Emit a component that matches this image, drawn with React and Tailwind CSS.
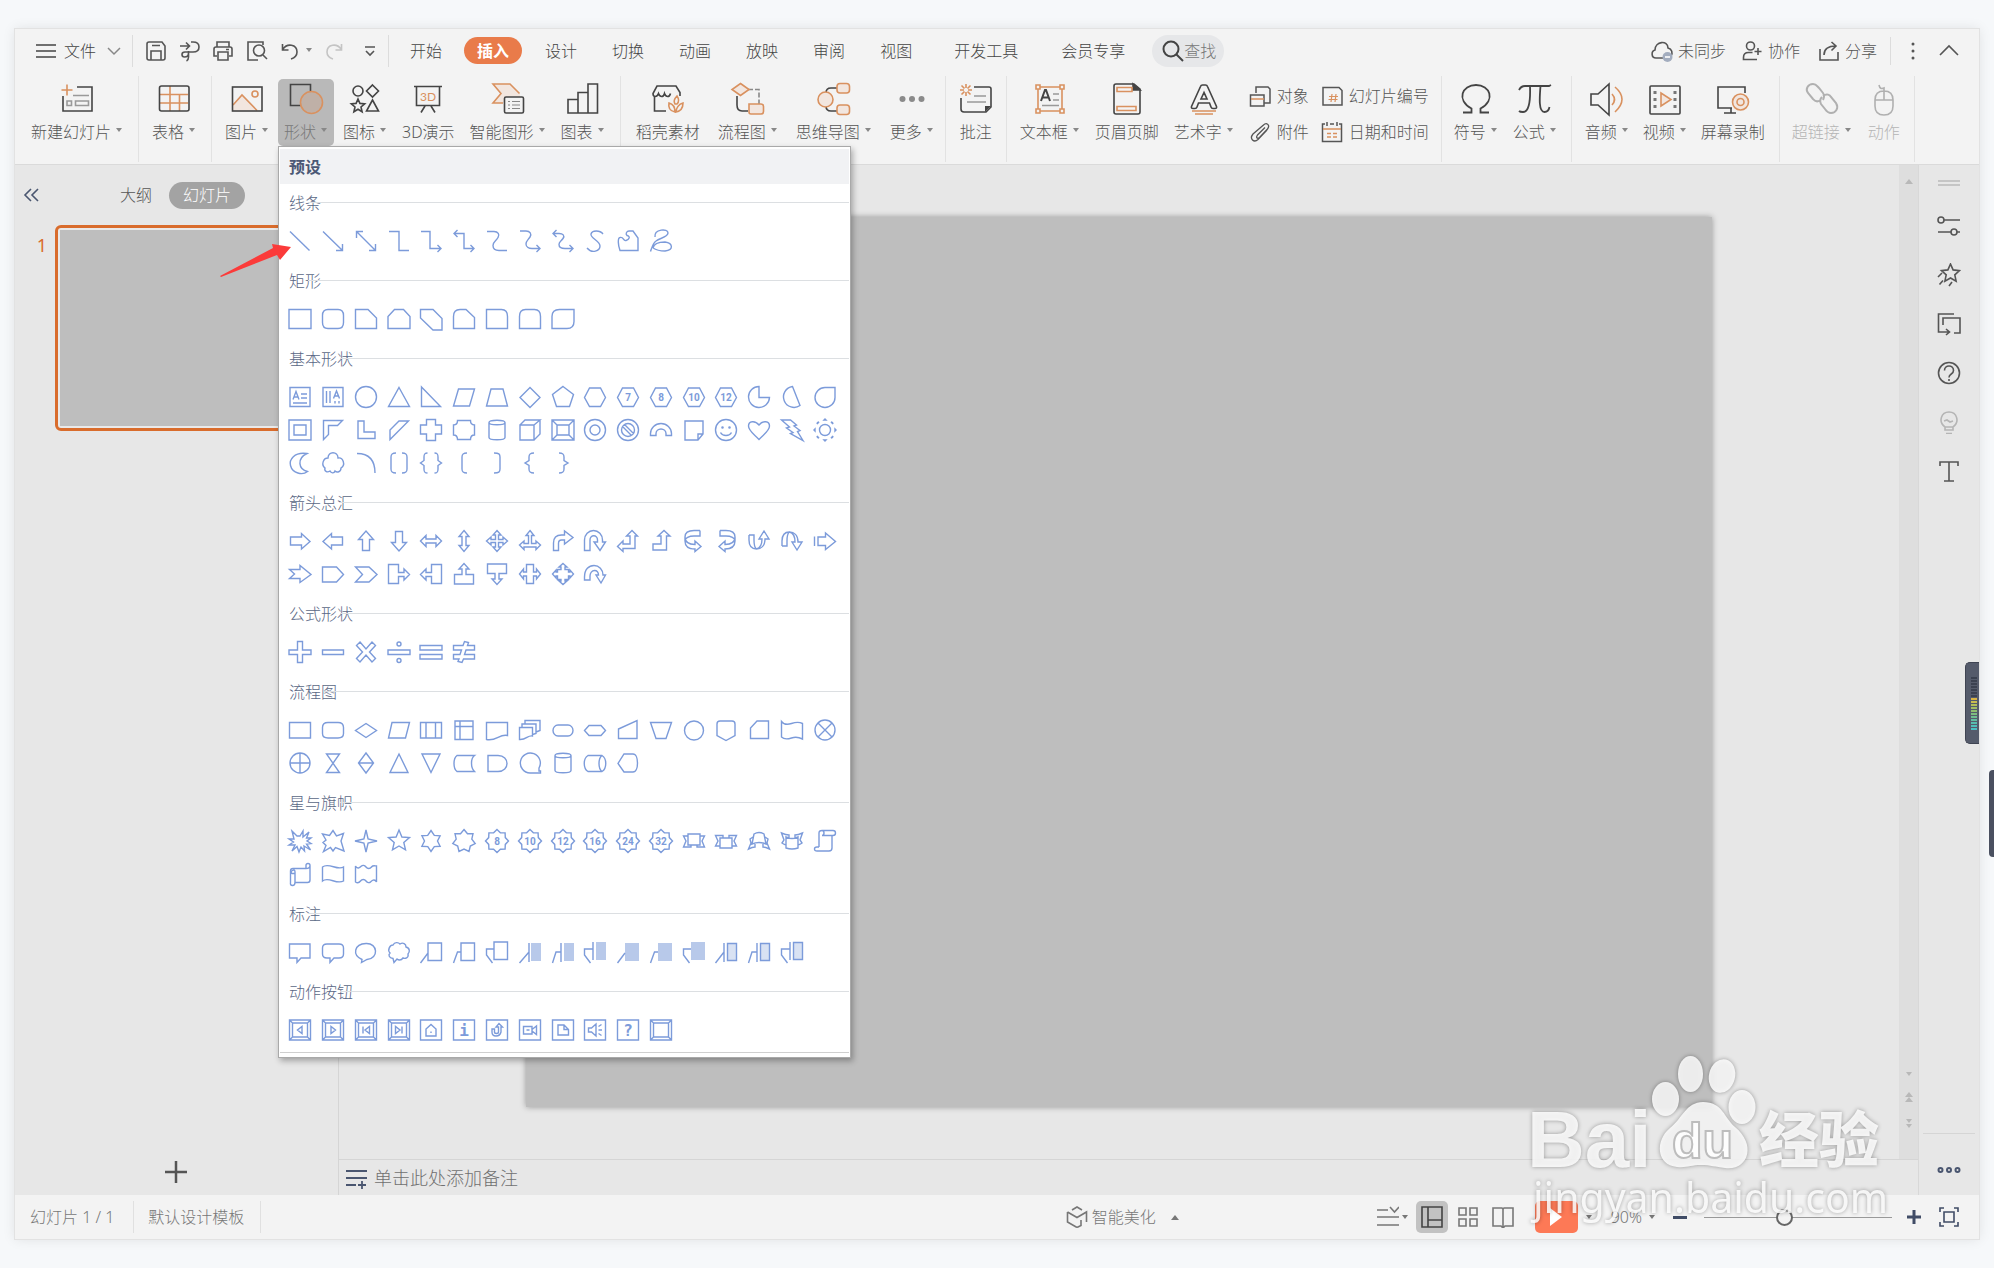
import React from 'react';

const circle = (x, y, r) =>
  `M${x - r} ${y}a${r} ${r} 0 1 0 ${2 * r} 0a${r} ${r} 0 1 0 ${-2 * r} 0z`;

const star = (n, outer, inner, cx = 12, cy = 12) => {
  const pts = [];
  for (let i = 0; i < n * 2; i++) {
    const r = i % 2 ? inner : outer;
    const a = (Math.PI * i) / n - Math.PI / 2;
    pts.push(`${(cx + r * Math.cos(a)).toFixed(1)} ${(cy + r * Math.sin(a)).toFixed(1)}`);
  }
  return `M${pts.join('L')}z`;
};

const HEX = 'M6.5 3h11l5 9.5-5 9h-11l-5-9z';
const BEVEL = 'M1 2h22v20H1zM6 7h12v10H6zM1 2l5 5M23 2l-5 5M1 22l5-5M23 22l-5-5';
const BOX = 'M1.5 2h21v20h-21z';
const FRAME = `${BOX}M4.5 5h15v14h-15zM1.5 2l3 3M22.5 2l-3 3M1.5 22l3-3M22.5 22l-3-3`;
const CAN = 'M4 4.5c0-3 16-3 16 0v15c0 3-16 3-16 0zM4 4.5c0 3 16 3 16 0';
const GEAR = star(8, 11.5, 9);

const sections = [
  {
    title: '线条',
    shapes: [
      'M2 2.5 21.5 21.5',
      'M2 2.5 21.5 21.5M21.5 15v6.5H15',
      'M2.5 2.5l19 19M21.5 15v6.5H15M2.5 9V2.5H9',
      'M2 2.5h10v19h10',
      'M2 2.5h9v17h11M18.5 16l3.5 3.5-3.5 3.5',
      'M2.5 4.5H12v15h10M18.5 16l3.5 3.5-3.5 3.5M5.5 1 2 4.5 5.5 8',
      'M2 2.5h7c4 0 6 3 4 6-2 4-5 4-5 8s3 5 6 5h8',
      'M2 2h6c4 0 6 3 4 6s-4 4-4 7 3 4.5 6 4.5h8M18.5 16l3.5 3.5-3.5 3.5',
      'M2 4.5h6c4 0 6 2 4 5s-4 3-4 6 3 4 6 4h8M18.5 16l3.5 3.5-3.5 3.5M5.5 1 2 4.5 5.5 8',
      'M20 5C17 1 9 1 8 5s9 7 9 12-8 8-13 2',
      'M4 21.5C2 16 1.5 9 4 8.5c4-1 3 4 6 3s5-4 1-5c-2-2 0-4.5 2-4.5h4l5 7v12.5z',
      'M6 8C5 0 19-1 19 4c0 4-8 5-12 8-3 2-4 6-5.5 10.5M4 19c1-5 7-6 12-6 8 1 9 8 0 9-6 0-9-1-12-3',
    ],
  },
  {
    title: '矩形',
    shapes: [
      'M1 2.5h22v19H1z',
      'M7 2.5h10q5.5 0 5.5 6v7q0 6-5.5 6H7q-5.5 0-5.5-6v-7q0-6 5.5-6z',
      'M1.5 2.5H14l8.5 8.5v10.5h-21z',
      'M7.5 2.5h9L23 9.5v12H1v-12z',
      'M1.5 2.5H14l9 9V23h-9L1.5 11z',
      'M8 2.5h6l8.5 8v11h-21v-12q0-7 6.5-7z',
      'M1.5 2.5h15q6 0 6 7v12h-21z',
      'M7.5 2.5h9q6 0 6 7v12h-21v-12q0-7 6-7z',
      'M8.5 2.5H23v12q0 7-7 7H1v-12q0-7 7.5-7z',
    ],
  },
  {
    title: '基本形状',
    shapes: [
      'M2 2.5h20v19H2zM5 14.5l3-8 3 8M6 12h4M13 9h6M13 13h6M5 18h14',
      'M2 2.5h20v19H2zM5.5 6v12M9 6v12M12.5 13.5l3-7.5 3 7.5M13.5 11h4M14 16v2.5M18 16v2.5',
      circle(12, 12, 10.5),
      'M12 2.5 22.5 21.5h-21z',
      'M2.5 2v19.5h19z',
      'M6.5 4h16l-5 17h-16z',
      'M6 4h12l4.5 17h-21z',
      'M12 2.5 22 12.5 12 22.5 2 12.5z',
      'M12 1.5 22.5 9.5l-4 12h-13l-4-12z',
      HEX,
      { d: HEX, text: '7' },
      { d: HEX, text: '8' },
      { d: HEX, text: '10' },
      { d: HEX, text: '12' },
      'M12 1.5v11h10.5A10.5 10.5 0 1 1 12 1.5z',
      'M12.5 1.5l7.5 19A10.5 10.5 0 1 1 12.5 1.5z',
      'M22 2.5v10a10 10 0 1 1-10-10z',
      'M1 2h22v20H1zM6 7h12v10H6z',
      'M2.5 2.5h19l-5 5h-9v9l-5 5z',
      'M4 3h6v11h11v6.5H4z',
      'M12 3h9.5L3 21.5V12z',
      'M7.5 1.5h9V7h6v9h-6v6.5h-9V16h-6V7h6z',
      'M5.5 2.5h13q0 4.5 4 4.5v10q-4 0-4 4.5h-13q0-4.500-4-4.500V7q4 0 4-4.500z',
      CAN,
      'M2 7h14v15H2zM2 7l5-5h15l-6 5M22 2v14l-6 6',
      BEVEL,
      circle(12, 12, 10.5) + circle(12, 12, 5),
      circle(12, 12, 10.5) + circle(12, 12, 6.5) + 'M6.5 8.5l9 9M8.5 6.5l9 9',
      'M1.5 17.5v-2a10.5 10 0 0 1 21 0v2H17v-2a5 4.5 0 0 0-10 0v2z',
      'M3 3h18v13l-5 6H3zM21 16h-5v6',
      circle(12, 12, 10.5) + circle(8.5, 9.5, 0.6) + circle(15.5, 9.5, 0.6) + 'M6.5 14.5a6 5 0 0 0 11 0',
      'M12 21.5C8 17 1.5 13 1.5 8 1.5 3 8 2 12 7c4-5 10.5-4 10.5 1 0 5-6.5 9-10.5 13.5z',
      'M1.5 2h9l6 5-2.5 1 6 4.5-2.5 1L23 22.5l-12.500-7 2.500-1L6.5 10l3-1z',
      circle(12, 12, 5.5) +
        'M11 2h2l-1-1zM11 22h2l-1 1zM2 11v2l-1-1zM22 11v2l1-1zM4 6l2-2-1.5.5zM18 4l2 2-.5-1.5zM4 18l2 2-1.5-.5zM20 18l-2 2 1.5-.5z',
      'M19 2.5C6 .5 1 9 2.5 14.5c2 8 12 10 17 6-9-2-11-13-.5-18z',
      'M7 7c0-7 10-7 10 0 5-1 8 7 3 10 0 4-4 5-6 3-1 3-4 2-5 0-3 2-6 0-5-3-4-3-2-10 3-10z',
      'M3 2.5c13 0 18 8 18 19.5',
      'M9 2C5 2 4 3 4 6v12c0 3 1 4 5 4M15 2c4 0 5 1 5 4v12c0 3-1 4-5 4',
      'M8.5 2C5 2 5 4 5 6v3.5L1.5 12 5 14.5V18c0 2 0 4 3.5 4M15.5 2C19 2 19 4 19 6v3.5l3.5 2.5-3.5 2.5V18c0 2 0 4-3.5 4',
      'M15 2c-4 0-5 1-5 4v12c0 3 1 4 5 4',
      'M9 2c5 0 6 1 6 4v12c0 3-1 4-6 4',
      'M16 2c-4 0-5 1-5 4v3.5L7 12l4 2.5V18c0 3 1 4 5 4',
      'M8 2c4 0 5 1 5 4v3.5l4 2.5-4 2.5V18c0 3-1 4-5 4',
    ],
  },
  {
    title: '箭头总汇',
    shapes: [
      'M2.5 8h11V4.5l8.5 8-8.5 7.5v-4h-11z',
      'M21.5 8h-11V4.5l-8.5 8 8.5 7.5v-4h11z',
      'M8.5 21.5v-11h-4L12 2l7.5 8.5h-4v11z',
      'M8.5 2.5v11h-4L12 22l7.5-8.5h-4v-11z',
      'M1.5 12 7 6.5V10h10V6.5l5.5 5.5-5.5 5.5V14H7v3.5z',
      'M12 1.5l5 6h-3v9h3l-5 6-5-6h3v-9H7z',
      'M12 1.5 16 6h-2.5v4.5H18V8l4.5 4-4.5 4v-2.5h-4.5V18H16l-4 4.5L8 18h2.5v-4.5H6V16l-4.5-4L6 8v2.5h4.5V6H8z',
      'M12 1.5l4 5h-2.5v8H18V12l4.5 4-4.5 4.5V18H6v2.5L1.5 16 6 12v2.5h4.5v-8H8z',
      'M2.5 21.5V14q0-8 8-8h3V2L22 8.5 13.5 15v-4h-3q-3 0-3 3.5v7z',
      'M1.5 21.5V11a9 9.5 0 0 1 18 0v2h3L17 21.5 11 13h3.5v-2a3.5 4 0 0 0-7.5 0v10.5z',
      'M1.5 17.5 7 12v3h7V7h-3.5L16 1.5 21.5 7H19v12.5H7v3z',
      'M4 15h8V7H9l6-5.5L21 7h-3.5v14H4z',
      'M18 1.5h-6C6 1.5 3 4 3 8c0 5 4 7.5 10 7.5V12l6 5.5-6 5V20C5 20 3 16 3 12V8M18 1.5V7h-6c-5 0-9 2-9 5',
      'M6 1.5h6c6 0 9 2.5 9 6.5 0 5-4 7.5-10 7.5V12l-6 5.5 6 5V20c8 0 10-4 10-8V8M6 1.5V7h6c5 0 9 2 9 5',
      'M2 6v5c0 6 3 9 7.5 9s8.5-3 8.5-10h4L17 2l-5 8h3c0 5-2 9-5.5 10M2 6h5v5c0 5 1 8 2.5 9',
      'M2 17v-5c0-6 3-9 7.5-9s8.5 3 8.5 10h4l-5 8-5-8h3c0-5-2-9-5.5-10M2 17h5v-5c0-5 1-8 2.5-9',
      'M1.5 7.5V17M5 8h7.5V4l10 8.5-10 8v-4H5z',
      'M1.5 7.5H12v-4l11 9-11 8v-4H1.5l5-4.5z',
      'M1.5 5h14l7 7.5-7 7.5h-14z',
      'M1.5 5H15l8 7.5-8 7.5H1.5l7-7.5z',
      'M1.5 2.5h10v8H17V7l5.5 5.5L17 18v-3.5h-5.5v7h-10z',
      'M22.5 2.5h-10v8H7V7l-5.5 5.5L7 18v-3.5h5.5v7h10z',
      'M2.5 22v-9.5H10V7H7l5-5.5L17 7h-3v5.5h7.5V22z',
      'M2.5 2v9.5H10V17H7l5 5.5 5-5.5h-3v-5.5h7.5V2z',
      'M8.5 2.5h7V10h3V7l4 5-4 5v-3h-3v7.5h-7V14h-3v3l-4-5 4-5v3h3z',
      'M12 1.5 16 5h-2v2.5h3.5V10H19V8l3.5 4-3.5 4v-2h-1.5v3.5H14V19h2l-4 3.5L8 19h2v-1.5H6.5V14H5v2l-3.5-4L5 8v2h1.5V7.5H10V5H8z',
      'M1.5 18v-3C1.5 7 6 3.5 11 3.5s9 4 9 9.5h2.5L18 21l-5-8h2.5c0-3-1.5-4.5-4-4.5S7 11 7 14v4z',
    ],
  },
  {
    title: '公式形状',
    shapes: [
      'M9.5 1.5h5V10H23v4.5h-8.5v8h-5v-8H1V10h8.5z',
      'M1.5 10h21v4.5h-21z',
      'M6 2l6 7 6-7 3.5 3.5-6 6.5 6 6.5L18 22l-6-7-6 7-3.5-3.5 6-6.5-6-6.5z',
      'M1 10h22v4.5H1z' + circle(12, 4, 2) + circle(12, 20.5, 2),
      'M1 5.5h22V10H1zM1 14.5h22V19H1z',
      'M1.5 5.5H11l1.5-4 4 1-1 3h7V10H14l-1.5 4.5h10V19h-11L10 22.5l-4-1L7 19H1.5v-4.5H8L9.5 10h-8z',
    ],
  },
  {
    title: '流程图',
    shapes: [
      'M1.5 4.5h21V20h-21z',
      'M7 4.5h10q5.5 0 5.5 5v6q0 4.5-5.5 4.5H7q-5.5 0-5.5-4.5v-6q0-5 5.5-5z',
      'M12 5.5 22.5 12.5 12 19.5 1.5 12.5z',
      'M5 4.5h17.5l-4 15.5h-17z',
      'M1.5 4.5h21V20h-21zM7 4.5V20M16.5 4.5V20',
      'M3 3h18v18.5H3zM8 3v18.5M3 8.5h18',
      'M1.5 4.5h21v13c-8-2-11 6-21 4z',
      'M1.5 9.5h13V18c-5-1-6 4-13 3.5zM4 9.5V6h14v9.5l-3.5 1M7 6V2.5h15v10L18 14',
      'M7 7h10a5 5.5 0 0 1 0 11H7A5 5.5 0 0 1 7 7z',
      'M6 7.5h12l4.5 5-4.5 5H6l-4.5-5z',
      'M2.5 11 21 2.5v18H2.5z',
      'M1.5 4.5h21l-5.5 16H7z',
      circle(12, 12.5, 9.5),
      'M6 3h12q3 0 3 3v11.5l-9 5-9-5V6q0-3 3-3z',
      'M10 3h11.5v17.5h-18V10z',
      'M1.5 3.5c3 4 7 3 10 2s7-2 11 0V21c-4-2-8-2-11-1s-7 2-10-1z',
      circle(12, 12, 10) + 'M5 5l14 14M19 5 5 19',
      circle(12, 12, 10) + 'M12 2v20M2 12h20',
      'M5.5 3h13l-13 18.500h13z',
      'M12 2l7.5 10L12 22 4.5 12zM4.5 12h15',
      'M12 3l9 18.5H3z',
      'M3 3h18l-9 18.5z',
      'M5 4.5h17.5c-4 3-4 12 0 16H5c-4-3-4-13 0-16z',
      'M3 4.5h10c12 0 12 16 0 16H3z',
      'M22.5 22H12a10 10 0 1 1 9-5v3h1.5z',
      CAN,
      'M5 4.5h14c5 3 5 13 0 16H5c-5-3-5-13 0-16zM19 4.5c-4 3-4 13 0 16',
      'M8 3h9c6 0 6 18 0 18H8l-6-8.5z',
    ],
  },
  {
    title: '星与旗帜',
    shapes: [
      'M12 7l3-5v6l6-5-2.5 6H23l-4 3 4 2.5-4.5.5 4 6L16 17l.5 5-3.5-4-2 5-2-5.5L4 22l3-6H1l4.5-3L1 10h5L4 2l5 5z',
      'M1.5 5l7 1.5L12 1.5 15.5 7l7-2.5L20 12l3 10-8.500-3.500L12 22l-2.500-3.500L2.500 22.500 5 16.500l-3-3 3-2.500z',
      star(4, 11, 3),
      star(5, 11, 5),
      star(6, 10.5, 6.5),
      star(7, 11.5, 8),
      { d: GEAR, text: '8' },
      { d: GEAR, text: '10' },
      { d: GEAR, text: '12' },
      { d: GEAR, text: '16' },
      { d: GEAR, text: '24' },
      { d: GEAR, text: '32' },
      'M6 5h12v11H6zM6 7H1.5L4 12l-2.500 6H9v-2M18 7h4.5L20 12l2.5 6H15v-2',
      'M6 9h12v10H6zM6 17H1.5L4 12 1.5 6.5H9V9M18 17h4.5L20 12l2.5-5.5H15V9',
      'M7 5q5-3 10 0l2 10q-7-3-14 0zM6 8l-3 2 1 4-2.5 6q4-2 6.5-2v-3M18 8l3 2-1 4 2.5 6q-4-2-6.5-2v-3',
      'M6 8q6 3 12 0v11q-6 2-12 0zM6 16q-3-1-4-2l2-3-2.5-7Q6 6 9 6v3M18 16q3-1 4-2l-2-3 2.5-7Q18 6 15 6v3',
      'M6 18V4q0-2.5 3-2.5h11q2.5 0 2.5 2.5T20 6.500h-1V19q0 3-3 3H4q-2.5 0-2.5-2T4 18h2M9 1.5q2 0 2 2.5T9 6.5h10',
      'M18 7V3.5q0-2 2-2t2 2V18q0 2.5-2.5 2.5H7q0 3-2.5 3t-2-3V9q0-2.5 2.5-2.5h13q4 0 4-3M7 20.5V10q0-3-2.5-1.5T4 11.5h3',
      'M1.5 5c6-5 15 4 21 0v14c-7 4-15-5-21 0z',
      'M1.5 4c2 4 5 1 6 0s3-1 4.5 1 4 2 5.5 0 3.5-1 5-1v16c-2-4-5-1-6 0s-3 1-4.5-1-4-2-5.5 0-3.5 2-5 1z',
    ],
  },
  {
    title: '标注',
    shapes: [
      'M1.5 4H22v14h-9l-4 4.5V18H1.5z',
      'M6 4h12q4.5 0 4.5 4v6q0 4-4.5 4h-5l-4 4.5V18H6q-4.5 0-4.5-4V8q0-4 4.5-4z',
      'M8 19.5C-2 15 0 4 12 3.5s13 15 1 16l-5.500 3z',
      'M6 5c2-4 6-2 7-1 3-2 6 0 6 3 4 1 4 5 2 7 1 4-3 5-5 4-2 3-5 2-6 1l-3 3.5-1-4C2 18 1 15 3 13c-3-3 0-8 3-8z',
      'M9 3h13.5v17.5H9zM1.5 23 9 13',
      'M9 3h13.5v17.5H9zM9 12H5.5l-4 11',
      'M9 2h13.5v17.5H9zM9 9H1.5v6l6 8',
      { d: 'M11 3v19M1.5 23 11 12', fill: 'M13 3h10v18H13z' },
      { d: 'M10 3v19M1.5 23 5 12h5', fill: 'M13 3h10v18H13z' },
      { d: 'M10 2v18M10 9H1.5v6l6 8', fill: 'M13 2h10v18H13z' },
      { d: 'M1.5 23 9 13', fill: 'M9 3h14v18H9z' },
      { d: 'M9 12H5.5l-4 11', fill: 'M9 3h14v18H9z' },
      { d: 'M9 9H1.5v6l6 8', fill: 'M9 2h14v18H9z' },
      { d: 'M10 3v19M1.5 23 10 12M13.5 3.5h9v17h-9z', fill: 'M13.5 3.5h9v17h-9z', pale: true },
      { d: 'M10 3v19M1.5 23 5 12h5M13.5 3.5h9v17h-9z', fill: 'M13.5 3.5h9v17h-9z', pale: true },
      { d: 'M10 2v18M10 9H1.5v6l6 8M13.5 2.5h9v17h-9z', fill: 'M13.5 2.5h9v17h-9z', pale: true },
    ],
  },
  {
    title: '动作按钮',
    shapes: [
      FRAME + 'M14 8.5v7L9.5 12z',
      FRAME + 'M10 8.5v7l4.5-3.5z',
      FRAME + 'M9 8.5v7M15.5 8.5v7L11 12z',
      FRAME + 'M15 8.5v7M8.5 8.5v7L13 12z',
      BOX + 'M7 18v-7l5-4.5 5 4.5v7zM12 13.5V15',
      { d: BOX, text: 'i', big: true },
      BOX + 'M7 11v3q0 4 4 4t5-4V9h1.5L14 5.5 11 9h2.5v5q0 1.5-2 1.5T9.5 14v-3z',
      BOX + 'M5.5 8.5H14V16H5.5zM14 11.5l4.500-3.500v8.500L14 13M8.5 12h3',
      BOX + 'M7 7h6l4.5 4.5V17H7zM13 7v4.5h4.5',
      BOX + 'M5.5 10h3L13 6v12l-4.500-4h-3zM15.5 8.5l3-2M15.5 12H19M15.5 15.5l3 2',
      { d: BOX, text: '?', big: true },
      FRAME,
    ],
  },
];

const ShapeIcon = ({ shape }) => {
  const s = typeof shape === 'string' ? { d: shape } : shape;
  return (
    <svg viewBox="0 0 24 24" className="h-6 w-6 overflow-visible" fill="none" stroke="#7c9bda" strokeWidth="1.4">
      {s.fill && <path d={s.fill} fill={s.pale ? '#d9e2f3' : '#b8c9ea'} stroke="none" />}
      <path d={s.d} />
      {s.text && (
        <text
          x="12"
          y={s.big ? 18 : 16}
          textAnchor="middle"
          fill="#7c9bda"
          stroke="none"
          fontWeight="700"
          fontSize={s.big ? 16 : 10}
          fontFamily={s.big ? 'DejaVu Sans Mono, monospace' : 'Roboto, sans-serif'}
        >
          {s.text}
        </text>
      )}
    </svg>
  );
};

const Caret = ({ up, className = '' }) => (
  <svg viewBox="0 0 8 5" className={`h-[5px] w-[8px] shrink-0 ${className}`} fill="currentColor">
    <path d={up ? 'M0 5 4 0l4 5z' : 'M1 0h6L4 4z'} />
  </svg>
);

const Line = ({ children, size = 24, className = 'h-6 w-6', width = 1.6 }) => (
  <svg
    viewBox={`0 0 ${size} ${size}`}
    className={`shrink-0 ${className}`}
    fill="none"
    stroke="currentColor"
    strokeWidth={width}
  >
    {children}
  </svg>
);

const O = '#d9915f';
const P = '#f2e6df';

// 34x34 ribbon drawings, dark strokes with orange accents
const art = {
  newSlide: (
    <>
      <path d="M17 5h15v24H3V14" />
      <path d="M7 2.5v11M1.5 8h11" stroke={O} />
      <path d="M13 13.5h16M7 19h4.5v4.5H7zM15.5 19h13v4.5h-13z" stroke="#999" />
    </>
  ),
  table: (
    <>
      <path d="M13 4v25M22.5 12v17M3 12.5h28M3 21h28" stroke={O} />
      <rect x="2.5" y="4" width="29.5" height="25" rx="2" />
    </>
  ),
  picture: (
    <>
      <path d="M3 23l9-10 15 15.5H3z" fill={P} stroke="none" />
      <path d="M3 23l9-10 15 15.5" stroke={O} />
      <circle cx="25" cy="12" r="3" stroke={O} />
      <rect x="2.5" y="5" width="29.5" height="24" />
    </>
  ),
  shape: (
    <>
      <path d="M1.5 2.5h20v21h-20z" />
      <circle cx="22.5" cy="20.5" r="11" fill="#bfb0a7" stroke={O} />
    </>
  ),
  icons: (
    <>
      <circle cx="10" cy="9" r="5" />
      <path d="M24.5 3l6 6-6 6-6-6zM24.5 18l6 11h-12z" />
      <path d={star(5, 7, 3.2, 10, 24)} />
    </>
  ),
  threeD: (
    <>
      <path d="M3 4.5h28M5.5 4.5v19h23v-19M14 24l-4 6.5M20 24l4 6.5" />
      <text x="17" y="18.5" textAnchor="middle" fontSize="12" fontFamily="Lato, sans-serif" fontWeight="400" fill={O} stroke="none">
        3D
      </text>
    </>
  ),
  smart: (
    <>
      <path d="M2 2h17l10 10v4H14v5H2l8-9.5z" fill={P} stroke="none" />
      <path d="M12 21H2l8-9.5L2 2h17l9.5 9.5" stroke={O} />
      <rect x="13.5" y="15" width="19" height="16" rx="1.5" fill="#f3f3f3" />
      <path d="M17 19.5h2M21 19.5h8M17 23h2M21 23h8M17 26.5h2M21 26.5h8" stroke="#888" strokeWidth="1.2" />
    </>
  ),
  chart: <path d="M2 17.5h10V31H2zM12 10.5h10V31H12zM22 2h9.500v29H22z" />,
  store: (
    <>
      <path d="M29 14v-3.500L25 4H6L2 11.500c0 4 4 4 5.500 0 1.500 4 5 4 6 0 1.500 4 5 4 6 0M3.500 15v14H15" />
      <path
        d="M24 30c-5-1-7-4-6-9 4 1 6 5 6 9zM25 30c0-4 3-8 7-9 0 5-2 8-7 9zM24 22c-2-3 0-6 2-8 2 3 2 6 0 8z"
        stroke={O}
      />
    </>
  ),
  flow: (
    <>
      <path d="M6 14v9q0 6 5 6h6" />
      <path d="M17 7.5h11V22" stroke="#888" strokeDasharray="5 2" />
      <path d="M9.5 1.5l8.5 6-8.5 6-8.5-6zM18 22h12q2.5 0 2.5 2.5v5q0 2.5-2.5 2.5H20q-2 0-2-2z" fill={P} stroke={O} />
    </>
  ),
  mind: (
    <>
      <path d="M9 11q0-5 5-5h6M9 24q0 5 5 5h6" />
      <circle cx="8.5" cy="17.5" r="7.5" fill={P} stroke={O} />
      <rect x="20" y="1.5" width="12.5" height="9.5" rx="3" fill={P} stroke={O} />
      <rect x="20" y="23" width="12.5" height="9.5" rx="3" fill={P} stroke={O} />
    </>
  ),
  more: (
    <g fill="#8a8a8a" stroke="none">
      <circle cx="7.5" cy="17" r="3" />
      <circle cx="17" cy="17" r="3" />
      <circle cx="26.5" cy="17" r="3" />
    </g>
  ),
  comment: (
    <>
      <path d="M15 5h15q2 0 2 2v18l-5 5H5q-3 0-3-3V16" />
      <path d="M32 24l-6 6v-6z" fill="#444" stroke="none" />
      <path d="M7 2v4M7 10v4M1 8h4M9 8h4M2.5 3.5l3 3M11.5 3.5l-3 3M2.5 12.5l3-3M11.5 12.5l-3-3" stroke={O} />
      <path d="M15 14h12M8 20h19" stroke="#999" />
    </>
  ),
  textBox: (
    <>
      <path d="M5 5h24v24H5z" stroke={O} />
      <path d="M3 3h4v4H3zM27 3h4v4h-4zM3 27h4v4H3zM27 27h4v4h-4z" fill="#f3f3f3" stroke={O} />
      <path d="M8 19l4-11h1l4 11M9.5 15.5h6" strokeWidth="2" />
      <path d="M20 12h6M20 18h6M9 23.5h17" stroke="#999" />
    </>
  ),
  header: (
    <>
      <path d="M6 2h18l6 5v23q0 2-2 2H6q-2 0-2-2V4q0-2 2-2z" />
      <path d="M23 2l7 6h-7z" fill="#444" />
      <path d="M7 5.5h15v4H7zM7 24.5h19v4H7z" stroke={O} />
    </>
  ),
  wordArt: (
    <>
      <path d="M15.5 3h3q1.500 0 2 1.500l9 20q.5 2-1.500 2h-2q-1.500 0-2-1.500l-1.500-4h-11L10 25q-.5 1.500-2 1.500H6q-2 0-1.500-2l9-20Q14 3 15.500 3zM17 10.500l-3 6.500h6z" />
      <path d="M5 29h24M8 32h18" stroke={O} />
    </>
  ),
  omega: <path d="M4 30.5h8.5v-4C-3 18 3 3 17 3s20 15 4.5 23.5v4H30" strokeWidth="1.8" />,
  pi: <path d="M1 8q2-4 6-4h24l2-1M12 4q1 26-7 26-3 0-4-1M22.500 4c-1 12-2 26 4 26q4 0 5-5" strokeWidth="1.8" />,
  audio: (
    <>
      <path d="M1 12h7L19 2v31L8 23H1z" />
      <path d="M22 12q5 5.5 0 11M25 5q14 12 0 25" stroke={O} />
    </>
  ),
  video: (
    <>
      <rect x="2" y="4" width="30" height="28" rx="1" />
      <path d="M13 11v13l10-6.5z" fill={P} stroke={O} />
      <path d="M7 9v20M27 9v20" strokeDasharray="3 4" strokeWidth="3" stroke="#777" />
    </>
  ),
  record: (
    <>
      <path d="M29 11V5H2v21h14M8 31h12M15 26v5" />
      <circle cx="24.5" cy="20" r="8" fill={P} stroke={O} />
      <circle cx="24.5" cy="20" r="3.5" stroke={O} />
    </>
  ),
  link: (
    <path
      d="M15 18.5C11 21 9 18 8 17l-5-6C0 7 3 2 8 2c3 0 4 2 6 4l4 5c2 3 1 5 0 7M18 14c4-3 7-1 8 1l5 6c3 5 0 10-5 10-3 0-4-1-6-4l-4-5c-1-2-1-5 1-7"
      strokeWidth="2"
    />
  ),
  mouse: <path d="M17 12V6q-4 2-5-3M8 18h18M17 12v6M17 9q9 0 9 9v6q0 9-9 9t-9-9v-6q0-9 9-9z" />,
};

const RibbonButton = ({ icon, label, caret, active, muted, children }) => (
  <div className="relative self-start">
    <button
      className={`flex h-[67px] flex-col items-center pt-[3px] ${
        active ? '-mx-[6px] rounded-[5px] bg-[#b9b9b9] px-[6px] text-[#777]' : muted ? 'text-[#b5b5b5]' : 'text-[#555]'
      }`}
    >
      <svg
        viewBox="0 0 34 34"
        className="h-[34px] w-[34px] overflow-visible"
        fill="none"
        stroke={muted ? '#b0b0b0' : '#444'}
        strokeWidth="1.6"
      >
        {art[icon]}
      </svg>
      <span className="mt-[6px] flex items-center gap-1 text-base leading-5 whitespace-nowrap">
        {label}
        {caret && <Caret className="-mt-[3px] text-[#888]" />}
      </span>
    </button>
    {children}
  </div>
);

const Group = ({ children, gap = 'gap-[15px]', pad = 'pr-[15px] pl-[13px]' }) => (
  <div className={`flex h-[86px] shrink-0 border-r border-[#e2e2e2] pt-[3px] ${pad} ${gap}`}>{children}</div>
);

const SmallButton = ({ label, children }) => (
  <button className="flex items-center gap-[6px] text-base leading-5 whitespace-nowrap text-[#555]">
    <Line size={22} className="h-[22px] w-[22px]" width={1.5}>
      {children}
    </Line>
    {label}
  </button>
);

const ShapesMenu = () => (
  <div className="absolute top-full -left-[6px] z-20 w-[573px] border border-[#a9a9a9] bg-white px-px pt-[2px] pb-1 shadow-[2px_3px_6px_rgba(0,0,0,0.3)]">
    <h2 className="flex h-[35px] items-center bg-[#f1f2f4] pl-[9px] text-base font-bold text-[#4b5875]">预设</h2>
    {sections.map((section) => (
      <section key={section.title}>
        <h3 className="flex h-[37px] items-center pl-[9px] text-base text-[#5a6785]">
          {section.title}
          <span className="-ml-[13px] h-px grow bg-[#dcdfe2]" />
        </h3>
        <div className="grid grid-cols-17 pt-[3px] pr-[8px] pb-[5px] pl-[4px]">
          {section.shapes.map((shape, i) => (
            <button key={i} aria-label={`${section.title} ${i + 1}`} className="flex h-[33px] items-center justify-center">
              <ShapeIcon shape={shape} />
            </button>
          ))}
        </div>
      </section>
    ))}
    <div className="mt-px h-px bg-[#cfcfcf]" />
    <svg viewBox="0 0 76 36" className="absolute top-[96px] -left-[60px] h-9 w-[76px]" fill="#fb3b3a">
      <path d="M1 33 54 5 53 1l19 3-11 13-3-5L2 34z" />
    </svg>
  </div>
);

const tabs = ['设计', '切换', '动画', '放映', '审阅', '视图'];

const TopBar = () => (
  <div className="flex h-[43px] items-center text-base text-[#444]">
    <button className="ml-[21px] flex items-center gap-2">
      <Line size={20} className="h-5 w-5" width={1.5}>
        <path d="M0 4h20M0 10h20M0 16h20" />
      </Line>
      文件
      <Line size={14} className="ml-[3px] h-[14px] w-[14px] text-[#888]" width={1.5}>
        <path d="M1 4l6 6 6-6" />
      </Line>
    </button>
    <span className="ml-[11px] h-8 w-px bg-[#dcdcdc]" />
    <div className="flex w-[255px] items-center pl-3 text-[#555]">
      <button aria-label="保存">
        <Line size={22} className="h-[22px] w-[22px]">
          <path d="M2 4q0-2 2-2h13l3 4v12q0 2-2 2H4q-2 0-2-2zM6 20v-9h10v9M7 5.5h8" />
        </Line>
      </button>
      <button aria-label="输出" className="ml-3">
        <Line size={22} className="h-[22px] w-[22px]">
          <path d="M1 6h9M7 2.5 10.5 6 7 9.5M12 2h2q6 0 6 5t-6 5H6q-3 0-3 2.5T5.5 17q4 0 4-4v-2M9.5 12v5q0 3-2 4" />
        </Line>
      </button>
      <button aria-label="打印" className="ml-[11px]">
        <Line size={22} className="h-[22px] w-[22px]">
          <path d="M5 7V2h12v5M5 16H2V9q0-2 2-2h14q2 0 2 2v7h-3M6 12h10v8H6zM14 9.5h3" />
        </Line>
      </button>
      <button aria-label="打印预览" className="ml-[12px]">
        <Line size={22} className="h-[22px] w-[22px]">
          <path d="M17 5V2H2v18h10M17 15l4 4" />
          <circle cx="13" cy="10.5" r="5.5" />
        </Line>
      </button>
      <button aria-label="撤销" className="ml-[13px] flex items-center gap-[6px]">
        <Line size={18} className="h-[18px] w-[18px]">
          <path d="M1.5 2v6h6M2 7c4-6 14-5 14 3 0 4-3 6-6 7" />
        </Line>
        <Caret className="text-[#888]" />
      </button>
      <button aria-label="恢复" className="ml-3 text-[#c4c4c4]">
        <Line size={18} className="h-[18px] w-[18px]">
          <path d="M16.5 2v6h-6M16 7C12 1 2 2 2 10c0 4 3 6 6 7" />
        </Line>
      </button>
      <button aria-label="自定义" className="ml-[21px]">
        <Line size={12} className="h-3 w-3">
          <path d="M1 2h10M2 6l4 4 4-4" />
        </Line>
      </button>
    </div>
    <span className="h-8 w-px bg-[#dcdcdc]" />
    <nav className="flex items-center">
      <button className="ml-[21px]">开始</button>
      <button className="ml-[22px] h-[27px] rounded-full bg-[#e97b4a] px-[13px] font-bold text-white">插入</button>
      <div className="ml-[23px] flex gap-[35px]">
        {tabs.map((tab) => (
          <button key={tab}>{tab}</button>
        ))}
      </div>
      <button className="ml-[42px]">开发工具</button>
      <button className="ml-[43px]">会员专享</button>
      <button className="ml-[27px] flex h-8 items-center rounded-full bg-[#e6e7e9] pr-2 pl-[10px] text-[#777]">
        <Line size={22} className="h-[22px] w-[22px] text-[#444]" width={2}>
          <circle cx="9" cy="9" r="7.5" />
          <path d="M14.5 14.5 21 21" />
        </Line>
        查找
      </button>
    </nav>
    <div className="ml-auto flex items-center text-[#555]">
      <button className="flex items-center gap-1">
        <Line size={24} className="h-6 w-6">
          <path d="M13 19H6C1 19 1 12 5 11c0-9 13-10 13-2 4 1 5 5 3 8" />
          <circle cx="17.5" cy="18" r="5" fill="#a3adbf" stroke="none" />
          <path d="M15 18h5" stroke="#fff" />
        </Line>
        未同步
      </button>
      <button className="ml-4 flex items-center gap-[6px]">
        <Line size={20} className="h-5 w-5">
          <circle cx="8.5" cy="5" r="4" />
          <path d="M15 18.5H1.5v-2q0-5 5-5h4M16 7v7M12.5 10.5h7" />
        </Line>
        协作
      </button>
      <button className="ml-[19px] flex items-center gap-[6px]">
        <Line size={20} className="h-5 w-5">
          <path d="M1 8v11h18v-8M5 14c0-6 4-9 12-9M12.5 1 17 5l-4.5 4.5" />
        </Line>
        分享
      </button>
      <span className="ml-[13px] h-7 w-px bg-[#dcdcdc]" />
      <button aria-label="更多" className="ml-[18px]">
        <svg viewBox="0 0 8 20" className="h-5 w-2" fill="#555">
          <circle cx="4" cy="3" r="1.5" />
          <circle cx="4" cy="10" r="1.5" />
          <circle cx="4" cy="17" r="1.5" />
        </svg>
      </button>
      <button aria-label="收起功能区" className="mr-[20px] ml-[22px]">
        <Line size={20} className="h-5 w-5">
          <path d="M1 14l9-9 9 9" />
        </Line>
      </button>
    </div>
  </div>
);

const Ribbon = () => (
  <div className="relative z-20 flex h-[93px] border-b border-[#dadada] pt-1 pl-[3px]">
    <Group>
      <RibbonButton icon="newSlide" label="新建幻灯片" caret />
    </Group>
    <Group>
      <RibbonButton icon="table" label="表格" caret />
    </Group>
    <Group>
      <RibbonButton icon="picture" label="图片" caret />
      <RibbonButton icon="shape" label="形状" caret active>
        <ShapesMenu />
      </RibbonButton>
      <RibbonButton icon="icons" label="图标" caret />
      <RibbonButton icon="threeD" label="3D演示" />
      <RibbonButton icon="smart" label="智能图形" caret />
      <RibbonButton icon="chart" label="图表" caret />
    </Group>
    <Group gap="gap-[18px]" pad="pr-[11px] pl-[15px]">
      <RibbonButton icon="store" label="稻壳素材" />
      <RibbonButton icon="flow" label="流程图" caret />
      <RibbonButton icon="mind" label="思维导图" caret />
      <RibbonButton icon="more" label="更多" caret />
    </Group>
    <Group pad="px-[13px]">
      <RibbonButton icon="comment" label="批注" />
    </Group>
    <Group pad="pr-[12px] pl-[13px]">
      <RibbonButton icon="textBox" label="文本框" caret />
      <RibbonButton icon="header" label="页眉页脚" />
      <RibbonButton icon="wordArt" label="艺术字" caret />
      <div className="flex flex-col items-start gap-[14px] pt-[6px]">
        <SmallButton label="对象">
          <path d="M7 8V2h12l2 2v14h-6M1.500 10H15v11H1.500z" />
          <path d="M2 14h13" stroke={O} />
        </SmallButton>
        <SmallButton label="附件">
          <path d="M16 6.500 8.500 14c-2 3 0 4 2 2.500l8-8.500c3-4-1-7-4-4L4 13c-4 5 1 9 5 5.500l9-9.500" strokeWidth="1.3" />
        </SmallButton>
      </div>
      <div className="-ml-[3px] flex flex-col items-start gap-[14px] pt-[6px]">
        <SmallButton label="幻灯片编号">
          <path d="M2 2.5h16l3 3V20H2z" />
          <path d="M11 9l-1 8M15 9l-1 8M8 11.500h9M7.500 14.500h9" stroke={O} strokeWidth="1.2" />
        </SmallButton>
        <SmallButton label="日期和时间">
          <path d="M4 3H1.5v17.5h19V3H18M9 3h4M6 1v4M16 1v4" />
          <path d="M2 8h18M6 12.5h4M12 12.5h4M6 16h4M12 16h4" stroke={O} />
        </SmallButton>
      </div>
    </Group>
    <Group pad="pr-[14px] pl-[12px]">
      <RibbonButton icon="omega" label="符号" caret />
      <RibbonButton icon="pi" label="公式" caret />
    </Group>
    <Group gap="gap-[14px]" pad="pr-[14px] pl-[13px]">
      <RibbonButton icon="audio" label="音频" caret />
      <RibbonButton icon="video" label="视频" caret />
      <RibbonButton icon="record" label="屏幕录制" />
    </Group>
    <Group pad="pr-[13px] pl-[12px]">
      <RibbonButton icon="link" label="超链接" caret muted />
      <RibbonButton icon="mouse" label="动作" muted />
    </Group>
  </div>
);

const SlidePanel = () => (
  <aside className="flex w-[324px] shrink-0 flex-col border-r border-[#d5d5d5] text-base text-[#555]">
    <div className="flex h-[60px] items-center">
      <button aria-label="收起" className="ml-2 text-[#4a5670]">
        <Line size={18} className="h-[18px] w-[18px]">
          <path d="M8 3 2 9l6 6M15 3 9 9l6 6" />
        </Line>
      </button>
      <button className="ml-[79px]">大纲</button>
      <button className="ml-[17px] h-[27px] rounded-full bg-[#a3a3a3] px-[14px] text-white">幻灯片</button>
    </div>
    <div className="flex">
      <span className="mt-[6px] w-10 pr-2 text-right text-lg font-normal text-[#d96c2c]">1</span>
      <button
        aria-label="幻灯片 1"
        className="aspect-[4/3] w-[274px] rounded-md border-3 border-[#d96c2c] bg-[#e9e9e9] p-[2px]"
      >
        <span className="block h-full w-full bg-[#bebebe]" />
      </button>
    </div>
    <button aria-label="新建幻灯片" className="mt-auto mr-[2px] mb-3 self-center">
      <Line size={22} className="h-[22px] w-[22px]" width={2.5}>
        <path d="M11 0v22M0 11h22" />
      </Line>
    </button>
  </aside>
);

const sideIcons = [
  { name: '对象属性', d: 'M7 6h16M1 18h13M20 18h3' + circle(4, 6, 3) + circle(17, 18, 3) },
  { name: '动画', d: star(5, 9.5, 4.5, 13.5, 10.5) + 'M1 14l4-4M2.5 21.5 6 17.500M12 23l3-4' },
  { name: '切换', d: 'M17 2H1.5v18H12M9 17l3.5 3L9 23M6 13V6h17v15h-6' },
  { name: '帮助', d: circle(12, 12, 10.5) + 'M7.5 9.5c0-6 9-6 9 0 0 4-4.5 3-4.5 7M12 18v2' },
  {
    name: '灵感',
    muted: true,
    d: 'M8 17c-7-5-4-15 4-15s11 10 4 15zM8 17v3h8v-3M9 23.5h6M7 11l3-1 3 2 3-1',
  },
  { name: '文字', d: 'M3 7V3h18v4M12 3v19M7 22h10' },
];

const SideBar = () => (
  <aside className="flex w-[61px] shrink-0 flex-col items-center border-l border-[#d8d8d8] text-[#555]">
    <Line size={24} className="mt-[6px] h-6 w-6 text-[#bbb]" width={1.4}>
      <path d="M1 10h22M1 14h22" />
    </Line>
    <div className="mt-[19px] flex flex-col gap-[25px]">
      {sideIcons.map((icon) => (
        <button key={icon.name} aria-label={icon.name} className={icon.muted ? 'text-[#b5b5b5]' : ''}>
          <Line>
            <path d={icon.d} />
          </Line>
        </button>
      ))}
    </div>
    <div className="mt-auto h-px w-[52px] bg-[#d5d5d5]" />
    <button aria-label="更多工具" className="mt-[24px] mb-[13px] text-[#4a5670]">
      <Line width={2}>
        <path d={circle(3.5, 12, 2) + circle(12, 12, 2) + circle(20.5, 12, 2)} />
      </Line>
    </button>
  </aside>
);

const Stage = () => (
  <main className="flex min-w-0 grow flex-col">
    <div className="flex min-h-0 grow">
      <div className="flex min-w-0 grow items-center justify-center">
        <div className="aspect-[4/3] w-[76%] bg-[#bebebe] shadow-[0_0_6px_rgba(0,0,0,0.35)]" />
      </div>
      <div className="flex w-[19px] shrink-0 flex-col items-center bg-[#dedede] pt-[14px] pb-[30px] text-[#b8b8b8]">
        <Caret up />
        <Caret className="mt-auto" />
        <Caret up className="mt-[15px]" />
        <Caret up />
        <Caret className="mt-[17px]" />
        <Caret />
      </div>
    </div>
    <div className="flex h-9 items-center gap-[7px] border-t border-[#d5d5d5] pl-[6px] text-lg text-[#707070]">
      <Line size={22} className="h-[22px] w-[22px] text-[#4a5670]" width={1.8}>
        <path d="M1 4h21M1 11h21M1 18h10M17 14v8M13 18h8" />
      </Line>
      单击此处添加备注
    </div>
  </main>
);

const StatusBar = () => (
  <footer className="flex h-[44px] shrink-0 items-center bg-[#f3f3f3] text-base text-[#777]">
    <span className="pl-[15px]">幻灯片 1 / 1</span>
    <span className="ml-[19px] h-8 w-px bg-[#e0e0e0]" />
    <span className="ml-[14px]">默认设计模板</span>
    <span className="ml-[16px] h-8 w-px bg-[#e0e0e0]" />
    <button className="mr-[198px] ml-auto flex items-center">
      <Line size={22} className="mr-1 h-[22px] w-[22px]">
        <path d="M6 4l5-3 5 3M1.5 6v10l9.500 5.500M1.5 6l9.500 5.500L20.500 6v10M11 21.500l4-2V14" />
      </Line>
      智能美化
      <Caret up className="ml-[15px]" />
    </button>
    <button aria-label="备注" className="flex items-center gap-[2px]">
      <Line size={22} className="h-[22px] w-[22px]">
        <path d="M0 4h11M13 1l4.5 5L22 1M0 11h22M0 19h22" />
      </Line>
      <Caret />
    </button>
    <button aria-label="普通视图" className="ml-[7px] flex h-8 w-8 items-center justify-center rounded-[5px] bg-[#c2c2c2] text-[#444]">
      <Line size={22} className="h-[22px] w-[22px]">
        <path d="M1 1h20v20H1zM7 1v20M7 14h14" />
      </Line>
    </button>
    <button aria-label="浏览视图" className="ml-[9px]">
      <Line size={22} className="h-[22px] w-[22px]">
        <path d="M2 2h7v7H2zM13 2h7v7h-7zM2 13h7v7H2zM13 13h7v7h-7z" />
      </Line>
    </button>
    <button aria-label="阅读视图" className="ml-[13px]">
      <Line size={22} className="h-[22px] w-[22px]">
        <path d="M1 2h9l1 1 1-1h9v18h-8l-2 2-2-2H1zM11 3v18" />
      </Line>
    </button>
    <button aria-label="放映" className="ml-[21px] flex h-8 w-[43px] items-center justify-center rounded-[5px] bg-[#fd7956]">
      <svg viewBox="0 0 14 18" className="h-[18px] w-[14px]" fill="#fff">
        <path d="M1 0v18l12-9z" />
      </svg>
    </button>
    <Caret className="ml-[7px]" />
    <label className="ml-[18px] flex items-center">
      90%
      <Caret className="mr-[17px] ml-[6px]" />
      <span className="h-[3px] w-[14px] bg-[#404c66]" />
      <input
        type="range"
        aria-label="缩放"
        defaultValue="42"
        className="ml-[17px] h-[18px] w-[188px] appearance-none bg-[linear-gradient(#999,#999)] bg-[length:100%_1px] bg-center bg-no-repeat [&::-webkit-slider-thumb]:h-[17px] [&::-webkit-slider-thumb]:w-[17px] [&::-webkit-slider-thumb]:appearance-none [&::-webkit-slider-thumb]:rounded-full [&::-webkit-slider-thumb]:border-2 [&::-webkit-slider-thumb]:border-[#666] [&::-webkit-slider-thumb]:bg-[#f3f3f3]"
      />
    </label>
    <button aria-label="放大" className="ml-[15px] text-[#404c66]">
      <Line size={14} className="h-[14px] w-[14px]" width={3}>
        <path d="M7 0v14M0 7h14" />
      </Line>
    </button>
    <button aria-label="适应窗口" className="mr-5 ml-[18px] text-[#404c66]">
      <Line size={20} className="h-5 w-5">
        <path d="M1 5V1h4M15 1h4v4M19 15v4h-4M5 19H1v-4M5 5h10v10H5z" />
      </Line>
    </button>
  </footer>
);

const Watermark = () => (
  <svg
    viewBox="0 0 370 180"
    className="pointer-events-none absolute right-[94px] bottom-[8px] z-10 h-[180px] w-[370px] overflow-visible drop-shadow-[0_0_2px_rgba(0,0,0,0.4)]"
    fill="#fff"
    fillOpacity="0.85"
  >
    <text x="12" y="116" fontSize="80" fontWeight="700" fontFamily="Liberation Sans, sans-serif">Bai</text>
    <ellipse cx="150.5" cy="48" rx="13.5" ry="17" />
    <ellipse cx="175.5" cy="23" rx="12.5" ry="18" />
    <ellipse cx="207" cy="25" rx="13" ry="17" transform="rotate(14 207 25)" />
    <ellipse cx="227" cy="56" rx="13.5" ry="17" />
    <path d="M188 51c20 0 21 16 32 25 22 18 13 44-10 41-10-1-14-3-24-3s-14 3-24 2c-21-2-22-27-7-39 12-9 16-26 33-26z" />
    <text x="157" y="107" fontSize="50" fontWeight="700" fontFamily="Liberation Sans, sans-serif" stroke="#bdbdbd" strokeWidth="2">
      du
    </text>
    <text x="244" y="111" fontSize="60" fontWeight="900" fontFamily="Noto Sans CJK SC, sans-serif">经验</text>
    <text x="18" y="162" fontSize="41" fontWeight="400" fontFamily="Noto Sans, sans-serif">jingyan.baidu.com</text>
  </svg>
);

const meter = [
  '#3b4150', '#3b4150', '#3b4150', '#3b4150', '#3b4150', '#3b4150', '#3b4150', '#d9b344', '#c9bc4e',
  '#b2bd58', '#a0bd64', '#8fbd70', '#7ebd80', '#6fbd90', '#62bda0', '#58bdae', '#50bdb8', '#4cbfc2',
];

const App = () => (
  <div className="relative h-screen overflow-hidden bg-[#f6f8fa] px-[15px] py-[29px] font-['Noto_Sans','Noto_Sans_CJK_SC',sans-serif] font-light">
    <div className="relative flex h-full flex-col bg-[#e7e7e7] shadow-[0_0_0_1px_#e2e2e2,0_0_12px_rgba(0,0,0,0.1)]">
      <header className="bg-[#f3f3f3]">
        <TopBar />
        <Ribbon />
      </header>
      <div className="flex min-h-0 grow">
        <SlidePanel />
        <Stage />
        <SideBar />
      </div>
      <StatusBar />
      <Watermark />
      <div className="absolute top-[633px] right-0 flex h-[82px] w-[14px] flex-col justify-center gap-px rounded-l-[5px] border border-r-0 border-[#3f4452] bg-[#555b6b] pl-[5px]">
        {meter.map((color, i) => (
          <span key={i} className="h-[2px] w-[6px]" style={{ backgroundColor: color }} />
        ))}
      </div>
    </div>
    <div className="absolute top-[770px] right-0 h-[87px] w-[5px] rounded-l-[4px] bg-[#4a5060]" />
  </div>
);

export default App;
